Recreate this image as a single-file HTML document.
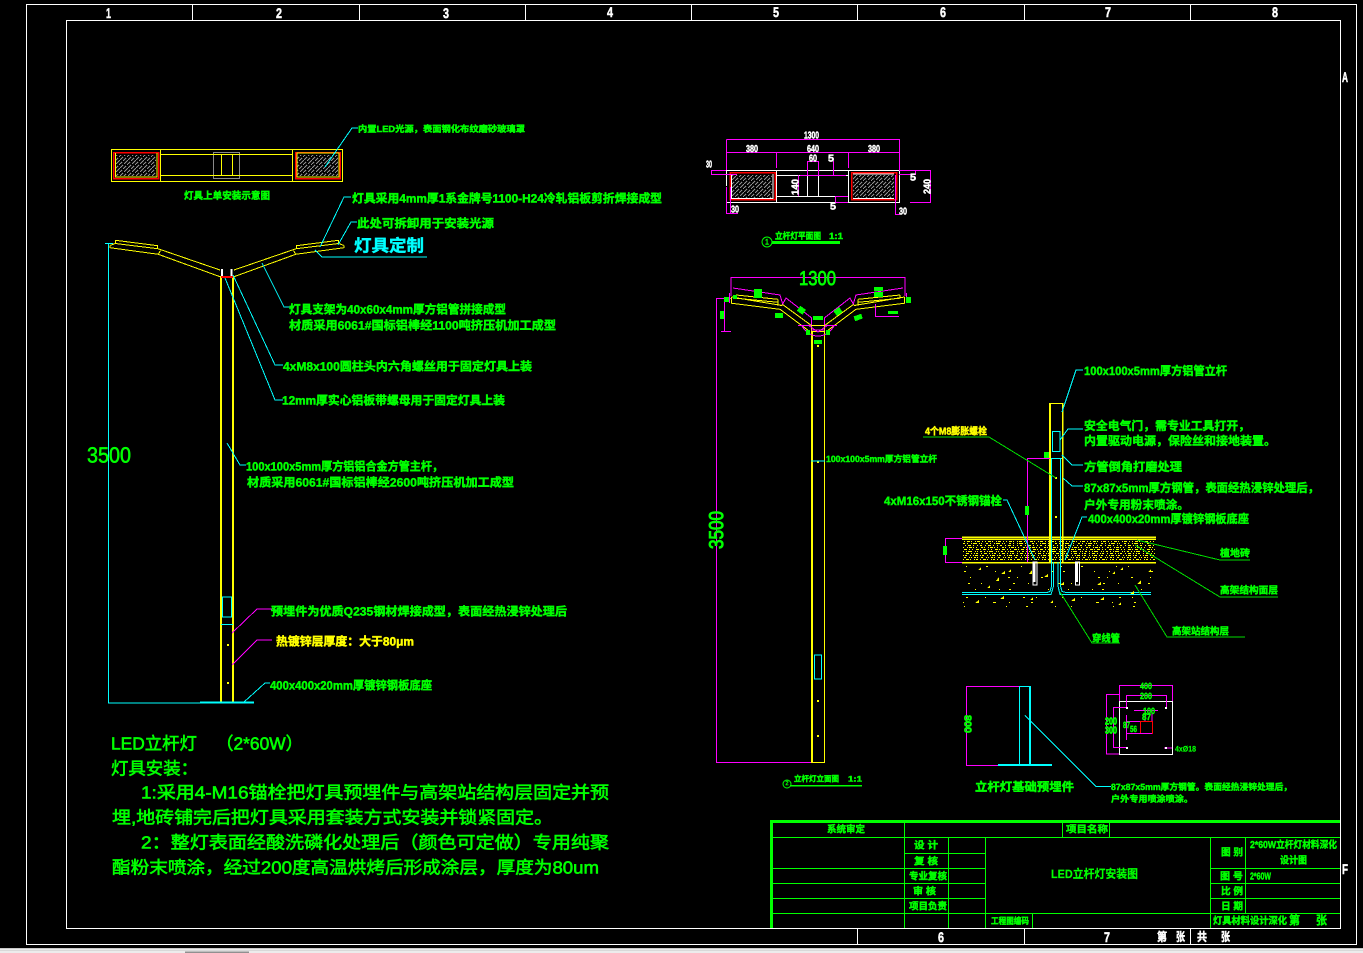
<!DOCTYPE html>
<html lang="zh">
<head>
<meta charset="utf-8">
<title>LED立杆灯安装图</title>
<style>
html,body{margin:0;padding:0;background:#000;width:1363px;height:953px;overflow:hidden}
svg{display:block}
path,rect{shape-rendering:crispEdges}
text{font-family:"Liberation Sans","Noto Sans CJK SC",sans-serif;dominant-baseline:central;text-rendering:geometricPrecision}
.g{fill:#0f0;stroke:#0f0;stroke-width:.45}
.c{fill:#0ff;stroke:#0ff;stroke-width:.4}
.y{fill:#ff0;stroke:#ff0;stroke-width:.45}
.w{fill:#fff;stroke:#fff;stroke-width:.5}
.n{stroke-width:.6}
.l{fill:none}
.s12{font-size:12px}.s10{font-size:10px}.s9{font-size:9px}.s8{font-size:8px}.s17{font-size:17.5px}
</style>
</head>
<body>
<svg width="1363" height="953" viewBox="0 0 1363 953" xmlns="http://www.w3.org/2000/svg">
<defs>
<pattern id="h" width="8" height="8" patternUnits="userSpaceOnUse">
<path d="M0 8L3 5M4 4L8 0M0 4L2 2M3 1L4 0M4 8L6 6M7 5L8 4" stroke="#909090" stroke-width="1" fill="none"/>
</pattern>
<g id="armA">
<path d="M110 245.500L115.300 243.500V240.300L157.700 245.700V248.700L161.700 250L220 270M115.300 243.500L157.700 248.700M110 245.500V247.700L158.300 254.300L160.500 250.500M158.300 254.300L220 276.700" stroke="#ff0" fill="none"/>
</g>
<g id="armB">
<path d="M731.500 297L781.700 305.500L782.300 304.300L811.700 325.700M736 295L778 299.300M736.700 298.300L778 302.300M731.700 303.300L780 309.300L781 310L810 331.700M731.500 297V303.300M778 299.300V304.500M736 295V298.300" stroke="#ff0" fill="none"/>
<path d="M733 288L780 295L782.700 304L786 298L811.700 318V325M729.300 293V303" stroke="#f0f" fill="none"/>
</g>
</defs>
<rect width="1363" height="953" fill="#000"/>

<!-- frames -->
<g class="l" stroke="#fff">
<rect x="26.500" y="4.500" width="1330" height="940"/>
<rect x="66.500" y="20.500" width="1274" height="908"/>
<path d="M192.500 4V20M359.500 4V20M525.500 4V20M691.500 4V20M857.500 4V20M1024.500 4V20M1190.500 4V20M857.500 929V944M1024.500 929V944M1190.500 929V944"/>
</g>
<g class="w" font-weight="700" text-anchor="middle" style="font-size:14px">
<text x="108.500" y="13" textLength="5" lengthAdjust="spacingAndGlyphs">1</text>
<text x="279" y="13" textLength="6" lengthAdjust="spacingAndGlyphs">2</text>
<text x="446" y="13" textLength="6" lengthAdjust="spacingAndGlyphs">3</text>
<text x="610" y="12" textLength="6" lengthAdjust="spacingAndGlyphs">4</text>
<text x="776" y="12" textLength="6" lengthAdjust="spacingAndGlyphs">5</text>
<text x="943" y="12" textLength="6" lengthAdjust="spacingAndGlyphs">6</text>
<text x="1108" y="12" textLength="6" lengthAdjust="spacingAndGlyphs">7</text>
<text x="1275" y="12" textLength="6" lengthAdjust="spacingAndGlyphs">8</text>
<text x="941" y="937" textLength="6" lengthAdjust="spacingAndGlyphs">6</text>
<text x="1107" y="937" textLength="6" lengthAdjust="spacingAndGlyphs">7</text>
<text x="1345" y="77" textLength="6" lengthAdjust="spacingAndGlyphs">A</text>
<text x="1345" y="869" textLength="6" lengthAdjust="spacingAndGlyphs">F</text>
</g>
<g class="w s12" font-weight="700">
<text x="1157" y="937" textLength="10" lengthAdjust="spacingAndGlyphs">第</text>
<text x="1176" y="937" textLength="9" lengthAdjust="spacingAndGlyphs">张</text>
<text x="1197" y="937" textLength="10" lengthAdjust="spacingAndGlyphs">共</text>
<text x="1221" y="937" textLength="9" lengthAdjust="spacingAndGlyphs">张</text>
</g>

<!-- top-left section -->
<rect x="116" y="155" width="40" height="21" fill="url(#h)"/>
<rect x="297" y="155" width="41" height="21" fill="url(#h)"/>
<g class="l">
<rect x="213.500" y="152.500" width="26" height="26" stroke="#8a8a8a"/>
<rect x="113.500" y="152.500" width="45" height="26" stroke="#f00" stroke-width="1.500"/>
<rect x="295.500" y="152.500" width="44.500" height="26" stroke="#f00" stroke-width="1.500"/>
<g stroke="#ff0">
<rect x="111.500" y="149.500" width="231" height="32"/>
<path d="M160.500 149V181M292.500 149V181M160 154.500H292M160 175.500H292M221.500 154V175M232.500 154V175M115.500 153V177H157V153M297 153H339V177H297Z"/>
</g>
</g>
<g class="g s8" font-weight="700"><text x="184" y="196.500" style="font-size:10px" textLength="86" lengthAdjust="spacingAndGlyphs">灯具上单安装示意图</text></g>
<use href="#armA"/>
<use href="#armA" transform="translate(454 0) scale(-1 1)"/>
<g class="l">
<path d="M221 276V703M233 276V703" stroke="#ff0" stroke-width="2"/>
<path d="M222 269V276M231.500 269V276" stroke="#fff" stroke-width="2"/>
<path d="M221 277H233" stroke="#f00" stroke-width="2"/>
<path d="M200 702.500H254" stroke="#0ff" stroke-width="2"/>
<path d="M108.500 243V703H200M105 243.500H113M222.500 597H231.500V617H222.500ZM221 624.500H233" stroke="#0ff"/>
<path d="M227 644h2v2h-2zM227 682h2v2h-2z" fill="#ff0"/>
</g>
<g fill="none" stroke="#0ff">
<path d="M358 128H352L325 167M351 197H344L320 247M357 222H351L338 245M315 250L322 257H427M290 307H284L262 263M233 275L275 365H283M225 278L275 400H283M227 443L240 465H246M244 702L265 683H270"/>
</g>
<path d="M232 633L257 609H272M232 665L257 640H272" fill="none" stroke="#f0f"/>
<g class="g" font-weight="700">
<text x="358" y="129" class="g s9" textLength="167" lengthAdjust="spacingAndGlyphs">内置LED光源，表面钢化布纹磨砂玻璃罩</text>
<text x="352" y="198.500" class="g s12" textLength="310" lengthAdjust="spacingAndGlyphs">灯具采用4mm厚1系金牌号1100-H24冷轧铝板剪折焊接成型</text>
<text x="357" y="223.500" class="g s12" textLength="137" lengthAdjust="spacingAndGlyphs">此处可拆卸用于安装光源</text>
<text x="289" y="309.500" class="g s12" textLength="217" lengthAdjust="spacingAndGlyphs">灯具支架为40x60x4mm厚方铝管拼接成型</text>
<text x="289" y="325.500" class="g s12" textLength="267" lengthAdjust="spacingAndGlyphs">材质采用6061#国标铝棒经1100吨挤压机加工成型</text>
<text x="283" y="366.500" class="g s12" textLength="249" lengthAdjust="spacingAndGlyphs">4xM8x100圆柱头内六角螺丝用于固定灯具上装</text>
<text x="282" y="400.500" class="g s12" textLength="223" lengthAdjust="spacingAndGlyphs">12mm厚实心铝板带螺母用于固定灯具上装</text>
<text x="246" y="466.500" class="g s12" textLength="197" lengthAdjust="spacingAndGlyphs">100x100x5mm厚方铝铝合金方管主杆，</text>
<text x="247" y="482.500" class="g s12" textLength="267" lengthAdjust="spacingAndGlyphs">材质采用6061#国标铝棒经2600吨挤压机加工成型</text>
<text x="271" y="611.500" class="g s12" textLength="296" lengthAdjust="spacingAndGlyphs">预埋件为优质Q235钢材焊接成型，表面经热浸锌处理后</text>
<text x="270" y="685.500" class="g s12" textLength="162" lengthAdjust="spacingAndGlyphs">400x400x20mm厚镀锌钢板底座</text>
<text x="87" y="455" style="font-size:22px;font-weight:400" class="g n" textLength="44" lengthAdjust="spacingAndGlyphs">3500</text>
</g>
<text x="354" y="246" class="c" style="font-size:17px" font-weight="700" textLength="70" lengthAdjust="spacingAndGlyphs">灯具定制</text>
<text x="276" y="641.500" class="y s12" font-weight="700" textLength="138" lengthAdjust="spacingAndGlyphs">热镀锌层厚度：大于80μm</text>

<!-- main notes -->
<g>
<text x="111" y="743.500" class="g s17 n" textLength="192" lengthAdjust="spacingAndGlyphs" xml:space="preserve">LED立杆灯    （2*60W）</text>
<text x="111" y="768.500" class="g s17 n" textLength="87" lengthAdjust="spacingAndGlyphs">灯具安装：</text>
<text x="141" y="792.500" class="g s17 n" textLength="468" lengthAdjust="spacingAndGlyphs">1:采用4-M16锚栓把灯具预埋件与高架站结构层固定并预</text>
<text x="112" y="817.500" class="g s17 n" textLength="441" lengthAdjust="spacingAndGlyphs">埋,地砖铺完后把灯具采用套装方式安装并锁紧固定。</text>
<text x="141" y="842.500" class="g s17 n" textLength="468" lengthAdjust="spacingAndGlyphs">2：整灯表面经酸洗磷化处理后（颜色可定做）专用纯聚</text>
<text x="112" y="867.500" class="g s17 n" textLength="487" lengthAdjust="spacingAndGlyphs">酯粉末喷涂，经过200度高温烘烤后形成涂层，厚度为80um</text>
</g>

<!-- top center plan -->
<rect x="732" y="175" width="40" height="23" fill="url(#h)"/>
<rect x="853" y="175" width="41" height="23" fill="url(#h)"/>
<g class="l">
<rect x="730" y="172.500" width="45" height="27" stroke="#f00" stroke-width="1.500"/>
<rect x="851.500" y="172.500" width="45" height="27" stroke="#f00" stroke-width="1.500"/>
<g stroke="#fff">
<path d="M726 170.500H899.500V202.500H726M726.500 170V186M776.500 170V202M848.500 170V202M776 175.500H848M776 196.500H848M807.500 175V196M818.500 175V196M731.500 174V198.500H773V174M853 198.500H894M853 174H894"/>
</g>
<g stroke="#f0f">
<path d="M726.500 139.500H899.500V170M726.500 139.500V170M726 152.500H899M776.500 152V168M848.500 152V168M711 170.500H726M711.500 170V175M711 174.500H737M899 170.500H930.500V202.500H910M899 174.500H915.500V170M726.500 187V213.500H738M730.500 187V213M895.500 175V214.500H900M798.500 175V196M807.500 161.500H818.500M807.500 161V175M818.500 161V175M833.500 161V175.500M800 175.500H846M835.500 196.500H848M835.500 196V202.500H848"/>
</g>
</g>
<g class="w s10" font-weight="700">
<text x="804" y="136" textLength="15" lengthAdjust="spacingAndGlyphs">1300</text>
<text x="746" y="149.500" textLength="12" lengthAdjust="spacingAndGlyphs">380</text>
<text x="807" y="149.500" textLength="12" lengthAdjust="spacingAndGlyphs">640</text>
<text x="868" y="149.500" textLength="12" lengthAdjust="spacingAndGlyphs">380</text>
<text x="809" y="159" textLength="8" lengthAdjust="spacingAndGlyphs">60</text>
<text x="828" y="159" textLength="6" lengthAdjust="spacingAndGlyphs">5</text>
<text x="706" y="165" textLength="6" lengthAdjust="spacingAndGlyphs">30</text>
<text transform="rotate(-90 796 187)" x="788" y="187" textLength="16" lengthAdjust="spacingAndGlyphs">140</text>
<text x="830" y="207" textLength="6" lengthAdjust="spacingAndGlyphs">5</text>
<text x="731" y="210" textLength="8" lengthAdjust="spacingAndGlyphs">30</text>
<text x="899" y="212" textLength="8" lengthAdjust="spacingAndGlyphs">30</text>
<text x="910" y="178" textLength="6" lengthAdjust="spacingAndGlyphs">5</text>
<text transform="rotate(-90 928 186)" x="920" y="186" textLength="15" lengthAdjust="spacingAndGlyphs">240</text>
</g>
<circle cx="767" cy="242" r="5" fill="none" stroke="#0f0"/>
<text x="765" y="242" class="g s8" textLength="4" lengthAdjust="spacingAndGlyphs">1</text>
<text x="775" y="236" class="g s9" font-weight="700" textLength="46" lengthAdjust="spacingAndGlyphs">立杆灯平面图</text>
<text x="829" y="236" class="g s9" font-weight="700" textLength="14" lengthAdjust="spacingAndGlyphs">1:1</text>
<rect x="772" y="241" width="68" height="3" fill="#0f0"/>

<!-- middle lamp -->
<use href="#armB"/>
<use href="#armB" transform="translate(1636 0) scale(-1 1)"/>
<g class="l">
<path d="M731 296V277.500H905V296" stroke="#f0f"/>
<path d="M716.500 298V762.500H811M716 298.500H731M724.500 298V331M721 331.500H731M875.500 304V316.500H899M798 325.500H837" stroke="#f0f"/>
<path d="M811.500 325.500H824.500V331.500H811.500Z" stroke="#ff0"/>
<path d="M812 331V762" stroke="#ff0" stroke-width="2"/>
<path d="M824.500 331V762M811 762.500H825" stroke="#ff0"/>
<path d="M814.500 655H821.500V679H814.500Z" stroke="#0ff"/>
<path d="M817 345h2v2h-2zM817 700h2v2h-2zM817 735h2v2h-2zM817 461h2v2h-2z" fill="#ff0"/>
</g>
<path d="M802 326Q808 336 818 336Q828 336 834 326M808 325L818 332L828 325M811 330H825" fill="none" stroke="#f0f"/>
<text x="799" y="279" class="g n" style="font-size:20px;font-weight:400;stroke-width:.8" textLength="37" lengthAdjust="spacingAndGlyphs">1300</text>
<text transform="rotate(-90 717 530)" x="698" y="530" class="g n" style="font-size:20px;font-weight:400;stroke-width:1" textLength="38" lengthAdjust="spacingAndGlyphs">3500</text>
<g fill="#0f0">
<rect x="754" y="289" width="8" height="9"/>
<rect x="724" y="297" width="5" height="5"/>
<rect x="733" y="295" width="4" height="4"/>
<rect x="720" y="311" width="4" height="8"/>
<rect x="798" y="307" width="7" height="6" transform="rotate(35 801 310)"/>
<rect x="775" y="313" width="8" height="5"/>
<rect x="813" y="316" width="10" height="4"/>
<rect x="834" y="309" width="7" height="6" transform="rotate(-35 837 311)"/>
<rect x="854" y="315" width="8" height="5" transform="rotate(-20 858 317)"/>
<rect x="874" y="287" width="9" height="4"/>
<rect x="874" y="292" width="9" height="5"/>
<rect x="906" y="297" width="5" height="6"/>
<rect x="806" y="330" width="4" height="5"/>
<rect x="826" y="330" width="4" height="5"/>
<rect x="814" y="340" width="8" height="4"/>
<rect x="888" y="311" width="10" height="3"/>
</g>
<text x="826" y="459" class="g s9" font-weight="700" textLength="111" lengthAdjust="spacingAndGlyphs">100x100x5mm厚方铝管立杆</text>
<circle cx="787" cy="784" r="4" fill="none" stroke="#0f0"/>
<text x="785.500" y="784" class="g" style="font-size:6px" textLength="3" lengthAdjust="spacingAndGlyphs">2</text>
<text x="794" y="779" class="g s8" font-weight="700" textLength="45" lengthAdjust="spacingAndGlyphs">立杆灯立面图</text>
<text x="848" y="779" class="g s8" font-weight="700" textLength="14" lengthAdjust="spacingAndGlyphs">1:1</text>
<rect x="790" y="785" width="72" height="1.500" fill="#0f0"/>
<path d="M811 461H825" stroke="#0ff"/>

<!-- foundation detail -->
<g class="l">
<g stroke="#ff0">
<path d="M964 541.500H1155" stroke-dasharray="1 2 3 1 1 3 1 1 3 2 1 2"/>
<path d="M963 543.500H1155" stroke-dasharray="2 2 1 3 1 1 4 2 1 1 1 4"/>
<path d="M965 545.500H1155" stroke-dasharray="1 2 3 2 1 3 1 2 2 3"/>
<path d="M963 547.500H1155" stroke-dasharray="1 3 1 1 3 1 1 2 1 4 2 1"/>
<path d="M964 549.500H1155" stroke-dasharray="3 2 1 2 1 3 3 1 1 2"/>
<path d="M963 551.500H1155" stroke-dasharray="1 2 1 1 4 3 1 1 1 2 2 2"/>
<path d="M966 553.500H1155" stroke-dasharray="3 2 1 2 1 1 2 3 1 2"/>
<path d="M963 555.500H1155" stroke-dasharray="1 1 2 3 1 2 1 1 3 2"/>
<path d="M964 557.500H1155" stroke-dasharray="2 3 1 1 1 2 2 1 1 3"/>
<path d="M963 559.500H1155" stroke-dasharray="1 2 3 1 1 3 1 1 2 2"/>
<path d="M966 566.500H1155" stroke-dasharray="1 19 2 33 1 11 1 27"/>
<path d="M964 571.500H1155" stroke-dasharray="2 29 1 14 1 41 2 9"/>
<path d="M970 577.500H1155" stroke-dasharray="1 37 2 7 1 23 2 17"/>
<path d="M968 583.500H1155" stroke-dasharray="2 11 1 31 2 13 1 29"/>
<path d="M975 589.500H1155" stroke-dasharray="1 23 1 9 2 37 1 19"/>
<path d="M966 597.500H1155" stroke-dasharray="2 17 1 37 2 11 1 25"/>
<path d="M963 602.500H1155" stroke-dasharray="1 29 3 13 1 21 2 33"/>
<path d="M964 606.500H1155" stroke-dasharray="1 41 1 19 2 27 1 15"/>
<path d="M1049.500 403.500H1062.500"/>
</g>
<path d="M962 537H1156M962 539H1156M962 562.500H1156" stroke="#ff0" stroke-width="1.500"/>
<path d="M1062.500 403V562" stroke="#ff0" stroke-width="1.500"/>
<path d="M1050 403V562" stroke="#ff0" stroke-width="2"/>
<g stroke="#0ff">
<path d="M1051.500 458V586L1050 591.500L1047 592.500H962M1060.500 458V586L1062 591.500L1066 592.500H1151M1053.500 562V586L1051 594.500H962M1058 562V586L1060 594.500H1151M1051 458.500H1062M1052.500 431.500H1060V451.500H1052.500Z"/>
</g>
<path d="M1033 562H1037V585H1033ZM1075.500 562H1079.500V585H1075.500Z" stroke="#fff"/>
<path d="M1034.500 562V582M1077 562V582" stroke="#fff" stroke-width="2"/>
<path d="M962 538.500H945.500V562.500H962M1050 458.500H1027.500V562" stroke="#f0f"/>
<path d="M1055 477h2v2h-2zM1055 516h2v2h-2z" fill="#ff0"/>
<path d="M978 570h3v-3zM1001 574h4v-3zM996 581h3v-4zM1008 572h3v-3zM1029 574h3v-4zM1044 577h4v-3zM1000 599h4v-3zM1030 600h3v-3zM1060 585h4v-3zM1071 601h4v-3zM1100 600h4v-3zM1112 574h3v-3zM1097 585h4v-3zM1130 594h4v-3zM1137 584h4v-4zM1118 605h3v-3zM1148 572h3v-3zM975 603h4v-3zM987 588h3v-3zM1120 570h3v-3zM1050 603h3v-3z" fill="#ff0"/>
</g>
<g fill="none" stroke="#0ff">
<path d="M1083 370H1076L1062 412M1083 429H1068L1060 440M1083 465H1072L1062 455M1083 486H1072L1063 478M1003 500H1007L1035 560M1087 517H1082L1065 560"/>
</g>
<g fill="none" stroke="#0d0">
<path d="M923 437H989L1056 478M1137 540L1220 560H1250M1135 545L1220 597H1278M1060 592L1092 643H1120M1135 585L1167 637H1245"/>
</g>
<g fill="#0f0">
<rect x="1044" y="452" width="5" height="6"/>
<rect x="1025" y="506" width="4" height="9"/>
<rect x="943" y="546" width="4" height="9"/>
</g>
<g font-weight="700">
<text x="1084" y="371" class="g s12" textLength="143" lengthAdjust="spacingAndGlyphs">100x100x5mm厚方铝管立杆</text>
<text x="1084" y="426" class="g s12" textLength="166" lengthAdjust="spacingAndGlyphs">安全电气门，需专业工具打开，</text>
<text x="1084" y="441" class="g s12" textLength="192" lengthAdjust="spacingAndGlyphs">内置驱动电源，保险丝和接地装置。</text>
<text x="1084" y="467" class="g s12" textLength="98" lengthAdjust="spacingAndGlyphs">方管倒角打磨处理</text>
<text x="1084" y="488" class="g s12" textLength="235" lengthAdjust="spacingAndGlyphs">87x87x5mm厚方钢管，表面经热浸锌处理后，</text>
<text x="1084" y="505" class="g s12" textLength="105" lengthAdjust="spacingAndGlyphs">户外专用粉末喷涂。</text>
<text x="1088" y="519" class="g s12" textLength="161" lengthAdjust="spacingAndGlyphs">400x400x20mm厚镀锌钢板底座</text>
<text x="884" y="501" class="g s12" textLength="118" lengthAdjust="spacingAndGlyphs">4xM16x150不锈钢锚栓</text>
<text x="925" y="432" class="y s10" textLength="62" lengthAdjust="spacingAndGlyphs">4个M8膨胀螺栓</text>
<text x="1220" y="554" class="g s10" textLength="30" lengthAdjust="spacingAndGlyphs">植地砖</text>
<text x="1220" y="591" class="g s10" textLength="58" lengthAdjust="spacingAndGlyphs">高架结构面层</text>
<text x="1092" y="639" class="g s10" textLength="28" lengthAdjust="spacingAndGlyphs">穿线管</text>
<text x="1172" y="632" class="g s10" textLength="57" lengthAdjust="spacingAndGlyphs">高架站结构层</text>
</g>

<!-- embedded parts -->
<g class="l">
<path d="M998 765.500H966.500V686.500H1019" stroke="#f0f"/>
<path d="M1019 686.500H1030.500M1019.500 686V765" stroke="#0ff"/>
<path d="M1030 686V765M998 765H1052" stroke="#0ff" stroke-width="2"/>
<path d="M1119.500 701.500H1172.500V754.500H1119.500Z" stroke="#fff"/>
<path d="M1140.500 721.500H1152.500V733.500H1140.500Z" stroke="#f00"/>
<path d="M1119.500 701V685.500H1172.500V701M1126.500 708V695.500H1166.500V708M1119 694.500H1106.500V754H1119M1113.500 707.500H1126M1113.500 707V747.500H1126M1126.500 715V740M1126 721.500H1140M1126 733.500H1152M1134 710.500H1158M1145 711V721M1152 711V721M1164 748H1172" stroke="#f0f"/>
<path d="M1126 707h2v2h-2zM1165 707h2v2h-2zM1126 747h2v2h-2zM1165 747h2v2h-2z" fill="#fff"/>
</g>
<path d="M1025 715.300L1096 786.500H1111" fill="none" stroke="#0ff"/>
<g font-weight="700">
<text transform="rotate(90 967 725)" x="957" y="725" class="g s10" style="stroke-width:.7" textLength="18" lengthAdjust="spacingAndGlyphs">800</text>
<text x="975" y="787" class="g s12" textLength="99" lengthAdjust="spacingAndGlyphs">立杆灯基础预埋件</text>
<text x="1111" y="787" class="g s9" textLength="181" lengthAdjust="spacingAndGlyphs">87x87x5mm厚方钢管。表面经热浸锌处理后，</text>
<text x="1111" y="799" class="g s9" textLength="82" lengthAdjust="spacingAndGlyphs">户外专用喷涂喷涂。</text>
<text x="1140" y="686" class="g s9" textLength="12" lengthAdjust="spacingAndGlyphs">400</text>
<text x="1140" y="696" class="g s9" textLength="12" lengthAdjust="spacingAndGlyphs">200</text>
<text x="1143" y="711" class="g s9" textLength="12" lengthAdjust="spacingAndGlyphs">100</text>
<text x="1142" y="717" class="g s9" textLength="9" lengthAdjust="spacingAndGlyphs">87</text>
<text x="1105" y="722" class="g s10" style="stroke-width:.8" textLength="12" lengthAdjust="spacingAndGlyphs">200</text>
<text x="1105" y="731" class="g s10" style="stroke-width:.8" textLength="12" lengthAdjust="spacingAndGlyphs">300</text>
<text x="1123" y="725" class="g s9" textLength="7" lengthAdjust="spacingAndGlyphs">87</text>
<text x="1130" y="729" class="g s9" textLength="7" lengthAdjust="spacingAndGlyphs">56</text>
<text x="1175" y="749" class="g s8" style="stroke-width:.2" textLength="21" lengthAdjust="spacingAndGlyphs">4xØ18</text>
</g>

<!-- title block -->
<g class="l" stroke="#0f0">
<path d="M770 821.500H1340" stroke-width="3"/>
<path d="M771.500 820V928" stroke-width="3"/>
<path d="M772 837.500H1340M772 868.500H904M772 883.500H985M772 898.500H985M772 913.500H1340M904 853.500H985M904 868.500H985M1210 868.500H1340M1210 883.500H1340M1210 898.500H1340M904.500 822V928M948.500 837V928M985.500 837V928M1032.500 913V928M1062.500 822V837M1109.500 822V837M1210.500 837V928M1245.500 837V913"/>
</g>
<g font-weight="700">
<text x="827" y="830" class="g s10" textLength="38" lengthAdjust="spacingAndGlyphs">系统审定</text>
<text x="1066" y="830" class="g s10" textLength="42" lengthAdjust="spacingAndGlyphs">项目名称</text>
<text x="914" y="846" class="g s10" textLength="24" lengthAdjust="spacingAndGlyphs" xml:space="preserve">设 计</text>
<text x="914" y="862" class="g s10" textLength="24" lengthAdjust="spacingAndGlyphs" xml:space="preserve">复 核</text>
<text x="909" y="877" class="g s10" textLength="38" lengthAdjust="spacingAndGlyphs">专业复核</text>
<text x="913" y="892" class="g s10" textLength="23" lengthAdjust="spacingAndGlyphs" xml:space="preserve">审 核</text>
<text x="909" y="907" class="g s10" textLength="38" lengthAdjust="spacingAndGlyphs">项目负责</text>
<text x="1051" y="874" class="g s12" style="stroke-width:.2" textLength="87" lengthAdjust="spacingAndGlyphs">LED立杆灯安装图</text>
<text x="991" y="921" class="g s9" textLength="38" lengthAdjust="spacingAndGlyphs">工程图编码</text>
<text x="1221" y="853" class="g s10" textLength="22" lengthAdjust="spacingAndGlyphs" xml:space="preserve">图 别</text>
<text x="1250" y="845.500" class="g s10" textLength="87" lengthAdjust="spacingAndGlyphs">2*60W立杆灯材料深化</text>
<text x="1280" y="861" class="g s10" textLength="27" lengthAdjust="spacingAndGlyphs">设计图</text>
<text x="1220" y="877" class="g s10" textLength="23" lengthAdjust="spacingAndGlyphs" xml:space="preserve">图 号</text>
<text x="1250" y="877" class="g s10" textLength="21" lengthAdjust="spacingAndGlyphs">2*60W</text>
<text x="1221" y="892" class="g s10" textLength="22" lengthAdjust="spacingAndGlyphs" xml:space="preserve">比 例</text>
<text x="1221" y="907" class="g s10" textLength="22" lengthAdjust="spacingAndGlyphs" xml:space="preserve">日 期</text>
<text x="1213" y="921.500" class="g s10" textLength="74" lengthAdjust="spacingAndGlyphs">灯具材料设计深化</text>
<text x="1289" y="920.500" class="g s12" textLength="11" lengthAdjust="spacingAndGlyphs">第</text>
<text x="1316" y="920.500" class="g s12" textLength="11" lengthAdjust="spacingAndGlyphs">张</text>
</g>

<!-- bottom chrome -->
<rect x="0" y="948" width="1363" height="5" fill="#ececec"/>
<rect x="0" y="948" width="1363" height="1" fill="#c8c8c8"/>
<rect x="0" y="950" width="1363" height="1" fill="#d8d8d8"/>
<rect x="185" y="951.500" width="64" height="1.500" fill="#909090"/>
</svg>
</body>
</html>
